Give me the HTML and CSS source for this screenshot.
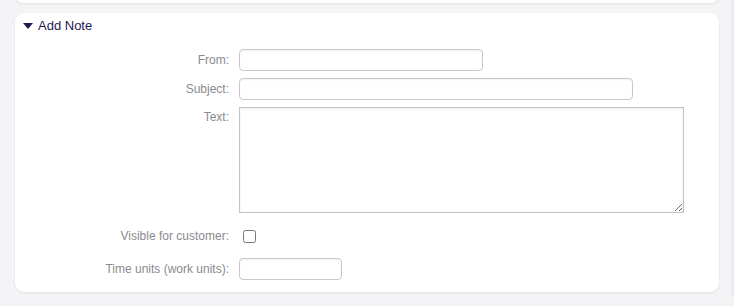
FILE: index.html
```html
<!DOCTYPE html>
<html lang="en">
<head>
    <meta charset="UTF-8">
    <title>Add Note</title>
    <link rel="stylesheet" href="styles.css">
</head>
<body>
    <div class="page">
        <div class="prev-card"></div>

        <div class="card">
            <div class="card-header">
                <span class="toggle"></span>
                <span class="card-title">Add Note</span>
            </div>

            <form class="note-form">
                <label for="from" class="field-label">From:</label>
                <div class="field"><input type="text" id="from" class="input input-from"></div>

                <label for="subject" class="field-label">Subject:</label>
                <div class="field"><input type="text" id="subject" class="input input-subject"></div>

                <label for="body" class="field-label label-top">Text:</label>
                <div class="field"><textarea id="body" class="textarea"></textarea></div>

                <label for="visible" class="field-label row-check">Visible for customer:</label>
                <div class="field row-check"><input type="checkbox" id="visible" class="checkbox"></div>

                <label for="units" class="field-label">Time units (work units):</label>
                <div class="field"><input type="text" id="units" class="input input-units"></div>
            </form>
        </div>
    </div>
</body>
</html>
```

FILE: styles.css
```css
body { margin: 0; background: #f4f4f7; font-family: "Liberation Sans", Arial, sans-serif; }
.page { padding: 0 15px; height: 306px; box-sizing: border-box; box-shadow: inset -3px 0 0 #ececf0; }
.prev-card { height: 12px; margin-top: -9px; background: #fff; border-radius: 0 0 8px 8px; box-shadow: 0 1px 3px rgba(0,0,0,0.08); }
.card { margin-top: 10px; background: #fff; border-radius: 9px; box-shadow: 0 1px 3px rgba(0,0,0,0.08); padding: 0 0 12px; }
.card-header { display: flex; align-items: center; height: 24px; padding: 0 0 0 7px; }
.toggle { width: 0; height: 0; border-left: 5px solid transparent; border-right: 5px solid transparent; border-top: 6px solid #1e1b54; margin: 1px 5px 0 1px; }
.card-title { font-size: 13px; color: #1e1b54; }
.note-form { display: grid; grid-template-columns: 214px 1fr; column-gap: 10px; row-gap: 7px; padding-top: 12px; align-items: center; }
.field-label { text-align: right; font-size: 12px; color: #8a8a8f; }
.label-top { align-self: start; padding-top: 3px; }
.field { display: flex; }
.input { height: 22px; box-sizing: border-box; border: 1px solid #c9c9cc; border-radius: 4px; box-shadow: inset 0 1px 2px rgba(0,0,0,0.06); padding: 2px 6px; font-size: 12px; }
.input-from { width: 244px; }
.input-subject { width: 394px; }
.input-units { width: 103px; }
.textarea { width: 445px; height: 106px; box-sizing: border-box; border: 1px solid #c3c3c6; border-radius: 0; box-shadow: inset 0 1px 3px rgba(0,0,0,0.08); font-size: 12px; margin: 0; display: block; }
.row-check { margin-top: 9px; margin-bottom: 8px; }
.checkbox { width: 13px; height: 13px; margin: 0 0 0 4px; }
```
